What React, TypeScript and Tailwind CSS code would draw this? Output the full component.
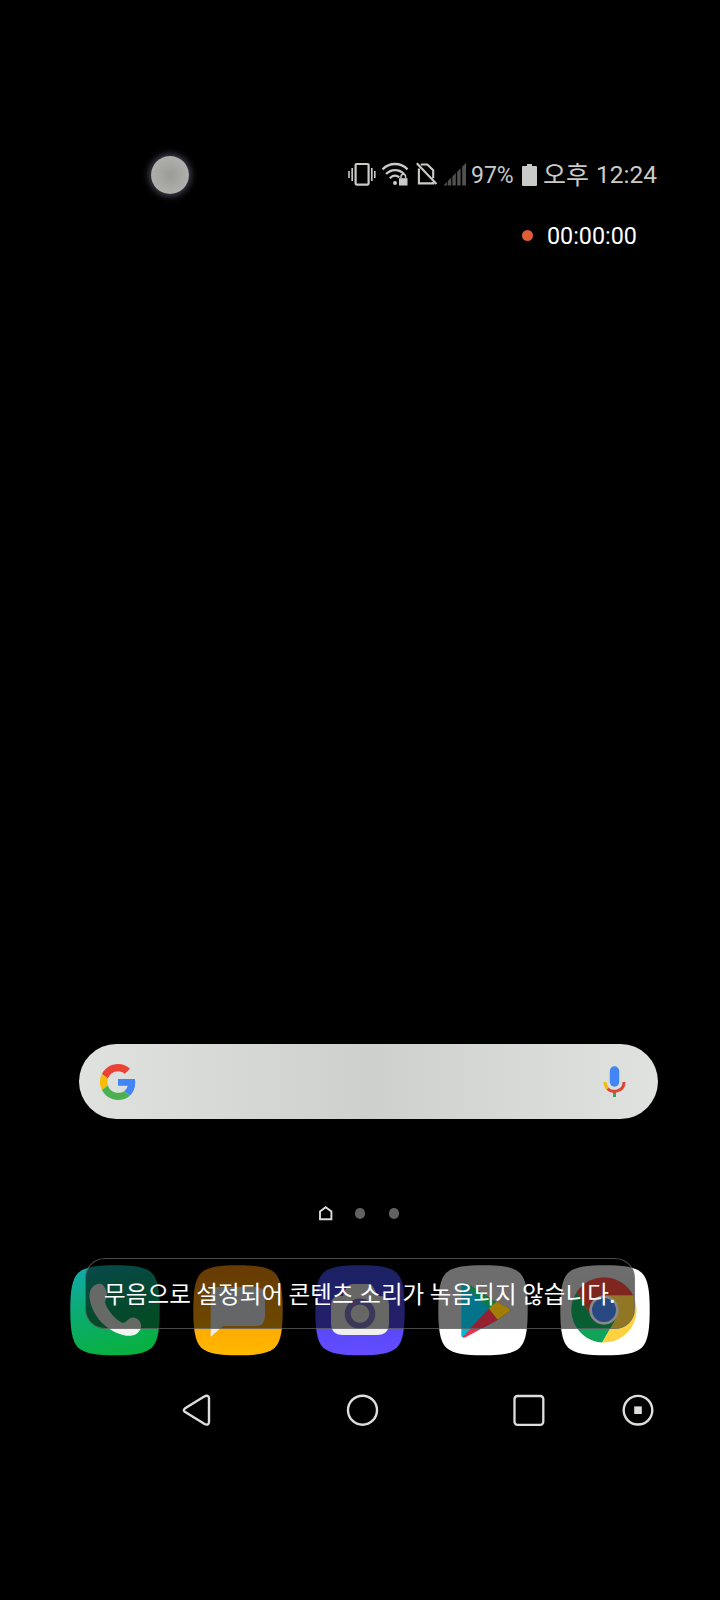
import type { ReactNode } from "react";

const SQUIRCLE =
  "M45 .3 C63 .3 75.500 1.800 82 8 C88.300 14.500 89.700 27 89.700 45 C89.700 63 88.300 76 82 82.500 C75.500 88.700 63 90.300 45 90.300 C27 90.300 14.500 88.700 8 82.500 C1.700 76 .3 63 .3 45 C.3 27 1.700 14.500 8 8 C14.500 1.800 27 .3 45 .3 Z";

function AppIcon({ fill, children }: { fill: string; children: ReactNode }) {
  return (
    <svg className="size-[90px] overflow-visible" viewBox="0 0 90 90">
      <defs>
        <linearGradient id="phone" x1="0" y1="0" x2="0.25" y2="1">
          <stop offset="0" stopColor="#13aab0" />
          <stop offset="0.5" stopColor="#0bab74" />
          <stop offset="1" stopColor="#08b044" />
        </linearGradient>
        <linearGradient id="message" x1="0" y1="0" x2="0" y2="1">
          <stop offset="0" stopColor="#f28a0c" />
          <stop offset="0.7" stopColor="#ffab00" />
          <stop offset="1" stopColor="#ffb900" />
        </linearGradient>
        <linearGradient id="camera" x1="0" y1="0" x2="0" y2="1">
          <stop offset="0" stopColor="#414fea" />
          <stop offset="0.7" stopColor="#5749fa" />
          <stop offset="1" stopColor="#654cff" />
        </linearGradient>
      </defs>
      <path d={SQUIRCLE} fill={fill} />
      {children}
    </svg>
  );
}

function PlayLogo() {
  return (
    <>
      <path fill="#05b5d4" d="M23.300 20v50.500q0 2 2 1.800L53 45 25 17.800q-1.700 0-1.700 2.200Z" />
      <path fill="#0fbd68" d="m25 17.800 28 27.200 8-6.300L29 18.500q-2.500-1.500-4-.7Z" />
      <path fill="#fbc20d" d="m59 36.800 12.500 6.700q2 1.500 0 3L59.500 55 51 43.500Z" />
      <path fill="#e8324d" d="M51 43.500 24.500 72.300q1.500 1 3.500-.3L60 54.700Z" />
    </>
  );
}

function ChromeLogo() {
  return (
    <>
      <path fill="#de4436" d="M16.850 27.050A32.500 32.500 0 0 1 73.100 30.500H44A14.500 14.500 0 0 0 31.400 52.250Z" />
      <path fill="#ffd13f" d="M73.100 30.500A32.500 32.500 0 0 1 42.050 77.450L56.600 52.250A14.500 14.500 0 0 0 44 30.500Z" />
      <path fill="#12a35a" d="M42.050 77.450A32.500 32.500 0 0 1 16.850 27.050L31.400 52.250A14.500 14.500 0 0 0 56.600 52.250Z" />
      <circle cx="44" cy="45" r="13.300" fill="#487fe4" stroke="#eee" strokeWidth="2.600" />
    </>
  );
}

function StatusBar() {
  return (
    <div className="flex h-[50px] items-center pl-[348px] text-[#c9cbc8]">
      <svg className="h-6 w-7 shrink-0" viewBox="0 0 28 24" fill="none" stroke="currentColor">
        <rect x="7.600" y="2" width="13" height="20.600" rx="1" strokeWidth="2.200" />
        <path d="M4.200 6v13M23.800 6v13" strokeWidth="1.700" />
        <path d="M1 9v7M26.800 9v7" strokeWidth="1.600" />
      </svg>
      <svg className="ml-[6px] h-6 w-[27px] shrink-0" viewBox="0 0 27 24" fill="none" stroke="currentColor" strokeWidth="2.300">
        <path d="M.6 7.400C7.300.2 18.800.2 25.500 7.400M4.100 12c5-5.300 13-5.300 18 0M7.800 16.200c3-3.100 6.500-3.100 9.500-1" />
        <circle cx="13" cy="21" r="2" fill="currentColor" stroke="none" />
        <rect x="17" y="16.200" width="8.500" height="7.300" fill="currentColor" stroke="none" />
        <path d="M19 16.500v-2a2.300 2.300 0 0 1 4.600 0v2" strokeWidth="1.500" />
      </svg>
      <svg className="ml-[7px] h-6 w-[22px] shrink-0" viewBox="0 0 22 24" fill="none" stroke="currentColor" strokeWidth="2.100">
        <path d="M.8 1.200 20.500 22M4.800 2.500h6.500l5.900 5.800v8M2.900 6.500v14.900h14.300V20" />
      </svg>
      <svg className="ml-[5px] h-6 w-6 shrink-0" viewBox="0 0 24 24" fill="#50524f">
        <path d="M.5 23.500 3.900 20v3.500ZM4.800 19l3.400-3.400v7.900H4.800ZM9.400 14.400l3.400-3.400v12.500H9.400ZM14.200 9.700l3.400-3.400v17.200h-3.400ZM19.200 4.700 23 1v22.500h-3.800Z" />
      </svg>
      <span className="mt-[2px] ml-[4px] w-[51px] shrink-0 font-[Roboto] text-[23px] leading-none">97%</span>
      <svg className="mt-px h-[22px] w-[15px] shrink-0" viewBox="0 0 15 22" fill="currentColor">
        <path d="M5 0h5v2h4q1 0 1 1v18q0 1-1 1H1q-1 0-1-1V3q0-1 1-1h4Z" />
      </svg>
      <span className="ml-[6px] w-[53px] shrink-0 whitespace-nowrap font-['Noto_Sans_CJK_KR',sans-serif] text-[25px] leading-none">
        <span className="relative -top-px">오후</span>
      </span>
      <span className="mt-[2px] shrink-0 font-[Roboto] text-[24.500px] leading-none">12:24</span>
    </div>
  );
}

function SearchBar() {
  return (
    <div className="ml-[79px] flex h-[75px] w-[579px] items-center justify-between rounded-full bg-linear-to-r from-[#dfe2df] via-[#ced0cd] to-[#dfe2df] pr-8 pl-[21px]">
      <svg className="size-9" viewBox="0 0 48 48">
        <path fill="#ea4335" d="M24 9.500c3.540 0 6.710 1.220 9.210 3.600l6.850-6.850C35.900 2.380 30.470 0 24 0 14.620 0 6.510 5.380 2.560 13.220l7.980 6.190C12.430 13.720 17.740 9.500 24 9.500z" />
        <path fill="#4285f4" d="M46.980 24.550c0-1.570-.15-3.090-.38-4.550H24v9.020h12.940c-.58 2.960-2.260 5.480-4.780 7.180l7.730 6c4.510-4.180 7.090-10.360 7.090-17.650z" />
        <path fill="#fbbc05" d="M10.530 28.590a14.500 14.500 0 0 1 0-9.180l-7.980-6.190a24 24 0 0 0 0 21.560l7.980-6.190z" />
        <path fill="#4caf50" d="M24 48c6.480 0 11.930-2.130 15.890-5.810l-7.730-6c-2.150 1.450-4.920 2.300-8.160 2.300-6.260 0-11.570-4.220-13.470-9.910l-7.980 6.190C6.510 42.620 14.620 48 24 48z" />
      </svg>
      <svg className="h-8 w-[23px]" viewBox="0 0 23 32" fill="none" strokeWidth="3">
        <rect x="6.800" y=".3" width="9.400" height="20.400" rx="4.700" fill="#4285f4" />
        <path d="M11.500 26v5" stroke="#34a853" />
        <path d="M2 16c0 2.800 1.200 5.300 3.200 7" stroke="#f4b912" />
        <path d="M4.700 22.600c4 4.700 16.300 3.500 16.300-6.600" stroke="#db4437" />
      </svg>
    </div>
  );
}

function PageDots() {
  return (
    <div className="flex h-4 items-center pl-[318px]">
      <svg className="h-4 w-4" viewBox="0 0 16 16" fill="none" stroke="#dadcd9" strokeWidth="1.900">
        <path d="M2 14.300V6.500L7.700 2.200l5.700 4.300v7.800Z" />
      </svg>
      <span className="mt-px ml-[21px] h-[11px] w-[10px] rounded-full bg-[#60625f]" />
      <span className="mt-px ml-[24px] h-[11px] w-[10px] rounded-full bg-[#60625f]" />
    </div>
  );
}

function Dock() {
  return (
    <div className="flex justify-between px-[70px]">
      <AppIcon fill="url(#phone)">
        <path fill="#f0f5ef" d="M28 19C32 17.500 35 21 36.500 27c1.500 6-2.500 8-1 12 2 6 10 15.500 16 18.500 4 2 6-5 12-5 5 1 8.500 5 7.500 10-2 7-9 10-18 7.500C35 65.500 21 49 19.500 32c-.5-7 3-12 8.500-13Z" />
      </AppIcon>
      <AppIcon fill="url(#message)">
        <path fill="#eceff0" d="M25 22h37q10 0 10 10v19q0 10-10 10H30L17.700 71.700V30q0-8 7.300-8Z" />
      </AppIcon>
      <AppIcon fill="url(#camera)">
        <path fill="#f0f0ee" d="M25 31h3c2-8 5-12 10-12h14c5 0 8 4 10 12h3q9 0 9 9v18q0 12-12 12H28q-12 0-12-12V40q0-9 9-9Z" />
        <circle cx="45" cy="48.700" r="12.300" fill="none" stroke="#8a82cf" strokeWidth="6" />
      </AppIcon>
      <AppIcon fill="#fff">
        <PlayLogo />
      </AppIcon>
      <AppIcon fill="#fff">
        <ChromeLogo />
      </AppIcon>
    </div>
  );
}

function NavBar() {
  return (
    <div className="flex h-9 items-center pl-[180px]">
      <svg className="size-9" viewBox="0 0 36 36" fill="none" stroke="#dedfdc" strokeWidth="2.400" strokeLinejoin="round">
        <path d="M4.800 16.600 23.800 4.800Q29 2 29 6.500v23.500Q29 34.200 23.800 31.600L4.800 19.800Q2.900 18.200 4.800 16.600Z" />
      </svg>
      <svg className="ml-[128px] size-9" viewBox="0 0 36 36" fill="none" stroke="#dedfdc" strokeWidth="2.400">
        <circle cx="18.500" cy="18.200" r="14.500" />
      </svg>
      <svg className="ml-[131px] size-9" viewBox="0 0 36 36" fill="none" stroke="#dedfdc" strokeWidth="2.300">
        <rect x="3.500" y="4" width="28.800" height="28.800" rx="3" />
      </svg>
      <svg className="ml-[73px] size-9" viewBox="0 0 36 36" fill="none" stroke="#dedfdc" strokeWidth="2.400">
        <circle cx="18" cy="18.200" r="14.300" />
        <rect x="14.200" y="14.400" width="7.600" height="7.600" fill="#dedfdc" stroke="none" />
      </svg>
    </div>
  );
}

export default function App() {
  return (
    <main className="relative flex h-[1600px] w-[720px] flex-col overflow-hidden bg-black pt-[149px]">
      <StatusBar />
      <div className="mt-[18px] flex h-9 items-center pl-[522px]">
        <span className="size-[11px] rounded-full bg-[#e35b34]" />
        <time className="mt-[3px] ml-[14px] font-[Roboto] text-[23.300px] leading-none text-white">00:00:00</time>
      </div>
      <div className="mt-[791px]">
        <SearchBar />
      </div>
      <div className="mt-[86px]">
        <PageDots />
      </div>
      <div className="mt-[44px]">
        <Dock />
      </div>
      <div className="mt-[37px]">
        <NavBar />
      </div>

      <div className="absolute top-[156px] left-[151px] size-[38px] rounded-full bg-radial from-[#9b9c98] to-[#b8b9b5] shadow-[0_0_7px_2px_#47475a]" />
      <div
        role="status"
        className="absolute top-[1258px] left-[85px] flex h-[71px] w-[550px] items-center overflow-hidden rounded-[20px] border border-[#80808090] bg-[#00000092] pl-[18px] font-['Noto_Sans_CJK_KR',sans-serif] text-[23.500px] leading-none tracking-[0.11px] whitespace-nowrap text-white"
      >
        <svg className="absolute top-0 left-0 h-[69px] w-[548px]" viewBox="0 0 548 69">
          <g transform="translate(351.500 6)" opacity="0.38">
            <PlayLogo />
          </g>
          <g transform="translate(474 6)" opacity="0.25">
            <ChromeLogo />
          </g>
        </svg>
        <span className="relative">무음으로 설정되어 콘텐츠 소리가 녹음되지 않습니다.</span>
      </div>
    </main>
  );
}
